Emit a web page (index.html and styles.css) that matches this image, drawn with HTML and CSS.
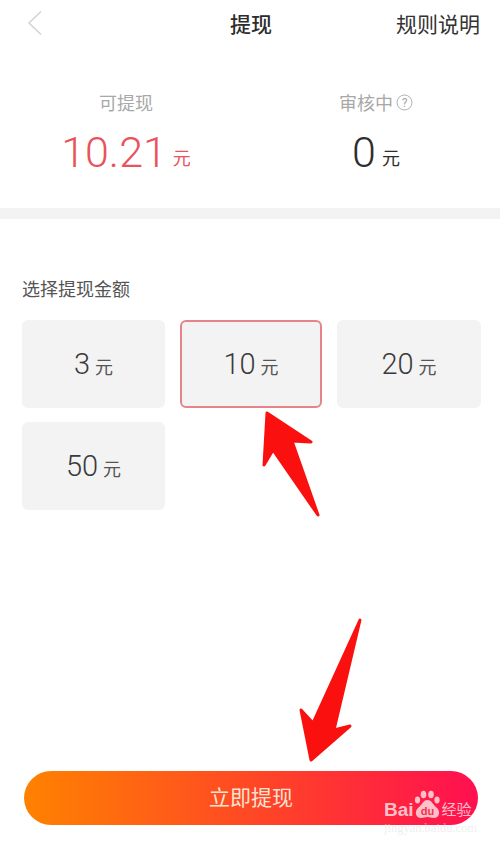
FILE: index.html
```html
<!DOCTYPE html>
<html lang="zh-CN">
<head>
    <meta charset="UTF-8">
    <meta name="viewport" content="width=device-width, initial-scale=1.0">
    <title>提现</title>
    <link rel="stylesheet" href="styles.css">
</head>
<body>
    <div class="page">
        <div class="header">
            <svg class="back" width="16" height="26" viewBox="0 0 16 26"><path d="M14 1.5 L2 13 L14 24.5" fill="none" stroke="#d4d4d4" stroke-width="1.6"/></svg>
            <div class="title">提现</div>
            <div class="rules">规则说明</div>
        </div>
        <div class="balance">
            <div class="balance-item left">
                <div class="balance-label">可提现</div>
                <div class="balance-value red">10.21<span class="unit">元</span></div>
            </div>
            <div class="balance-item right">
                <div class="balance-label">审核中<svg class="help" width="17" height="17" viewBox="0 0 17 17"><circle cx="8.5" cy="8.5" r="7.5" fill="none" stroke="#b0b0b0" stroke-width="1"/><text x="8.5" y="12.5" text-anchor="middle" class="help-mark">?</text></svg></div>
                <div class="balance-value">0<span class="unit">元</span></div>
            </div>
        </div>
        <div class="divider"></div>
        <div class="section-title">选择提现金额</div>
        <div class="amounts">
            <div class="amount">3<span class="amount-unit">元</span></div>
            <div class="amount selected">10<span class="amount-unit">元</span></div>
            <div class="amount">20<span class="amount-unit">元</span></div>
            <div class="amount">50<span class="amount-unit">元</span></div>
        </div>
        <div class="spacer"></div>
        <div class="submit">立即提现</div>

        <!-- 红色箭头和水印都盖在页面上面 -->
        <svg class="arrows" width="500" height="845" viewBox="0 0 500 845">
            <path d="M267 413 L311 442 L292 441 L318 515 L273 450 L264 465 Z" fill="#fb1010" stroke="#fb1010" stroke-width="3" stroke-linejoin="round"/>
            <path d="M360 620 L334 730 L350 726 L311 760 L301 710 L313 723 Z" fill="#fb1010" stroke="#fb1010" stroke-width="3" stroke-linejoin="round"/>
        </svg>
        <div class="watermark">
            <div class="wm-logo">
                <span class="wm-bai">Bai</span>
                <svg class="wm-paw" width="27" height="30" viewBox="0 0 27 30">
                    <ellipse cx="3.5" cy="10" rx="2.6" ry="3.4"/>
                    <ellipse cx="9.5" cy="4.5" rx="2.8" ry="3.8"/>
                    <ellipse cx="17" cy="4.5" rx="2.8" ry="3.8"/>
                    <ellipse cx="23" cy="10" rx="2.6" ry="3.4"/>
                    <path d="M13.5 10 C18 10 19 15 23 18 C27 22 25 28 20 28 C17 28 16 27 13.5 27 C11 27 10 28 7 28 C2 28 0 22 4 18 C8 15 9 10 13.5 10 Z"/>
                    <text x="13.5" y="25" text-anchor="middle" class="wm-du">du</text>
                </svg>
                <span class="wm-cn">经验</span>
            </div>
            <div class="wm-url">jingyan.baidu.com</div>
        </div>
    </div>
</body>
</html>
```

FILE: styles.css
```css
* {
    box-sizing: border-box;
}
body {
    margin: 0;
    background-color: #fff;
    font-family: Roboto, "Noto Sans CJK SC", sans-serif;
}
.page {
    position: relative;
    display: flex;
    flex-direction: column;
    width: 500px;
    height: 845px;
    overflow: hidden;
    color: #333;
}
.header {
    display: grid;
    grid-template-columns: 1fr auto 1fr;
    align-items: center;
    height: 51px;
    padding: 0 20px 5px 22px;
}
.back {
    margin-left: 5px;
}
.title {
    font-size: 21px;
    font-weight: 500;
    color: #2c2c2c;
}
.rules {
    font-size: 21px;
    color: #333;
    text-align: right;
}
.balance {
    display: flex;
    height: 157px;
    padding-top: 37px;
}
.balance-item {
    display: flex;
    flex-direction: column;
    align-items: center;
}
.left {
    width: 252px;
}
.right {
    width: 248px;
}
.balance-label {
    display: flex;
    align-items: center;
    height: 28px;
    font-size: 18px;
    color: #a8a8a8;
}
.help {
    margin-left: 3px;
}
.help-mark {
    font-size: 12px;
    fill: #a8a8a8;
}
.balance-value {
    margin-top: 11px;
    font-size: 43px;
    font-weight: 300;
    line-height: 50px;
    color: #2e2e2e;
}
.red {
    color: #e8535c;
}
.unit {
    margin-left: 6px;
    font-size: 18px;
    font-weight: 400;
    vertical-align: 2px;
}
.divider {
    height: 11px;
    background-color: #f3f3f3;
}
.section-title {
    margin: 58px 0 0 22px;
    height: 26px;
    font-size: 18px;
    line-height: 26px;
    color: #555;
}
.amounts {
    display: grid;
    grid-template-columns: 143px 142px 144px;
    grid-auto-rows: 88px;
    gap: 14px 15px;
    margin: 17px 0 0 22px;
}
.amount {
    display: flex;
    align-items: center;
    justify-content: center;
    border-radius: 6px;
    background-color: #f3f3f3;
    font-size: 29px;
    font-weight: 300;
    color: #3a3a3a;
}
.selected {
    border: 2px solid #e5858a;
}
.amount-unit {
    margin: 3px 0 0 5px;
    font-size: 18px;
    font-weight: 400;
    color: #555;
}
.spacer {
    flex: 1;
}
.submit {
    display: flex;
    align-items: center;
    justify-content: center;
    height: 54px;
    margin: 0 22px 20px 24px;
    padding-bottom: 4px;
    border-radius: 27px;
    background: linear-gradient(90deg, #ff8200, #ff3a2e 62%, #ff0f50);
    font-size: 21px;
    color: #fbe3d3;
}
.arrows {
    position: absolute;
    top: 0;
    left: 0;
}
.watermark {
    position: absolute;
    top: 791px;
    left: 384px;
    width: 92px;
    color: rgba(255, 255, 255, 0.72);
}
.wm-logo {
    display: flex;
    align-items: flex-end;
    height: 29px;
}
.wm-bai {
    font-family: "Liberation Sans", sans-serif;
    font-size: 19px;
    font-weight: 700;
    line-height: 20px;
}
.wm-paw {
    flex: none;
    fill: rgba(255, 255, 255, 0.72);
}
.wm-du {
    font-family: "Liberation Sans", sans-serif;
    font-size: 11px;
    font-weight: 700;
    fill: #f5304a;
}
.wm-cn {
    margin-left: 1px;
    font-size: 15px;
    line-height: 20px;
    white-space: nowrap;
}
.wm-url {
    margin-top: 1px;
    font-family: "Liberation Serif", serif;
    font-size: 12.5px;
    color: rgba(225, 225, 225, 0.55);
    white-space: nowrap;
}
```
